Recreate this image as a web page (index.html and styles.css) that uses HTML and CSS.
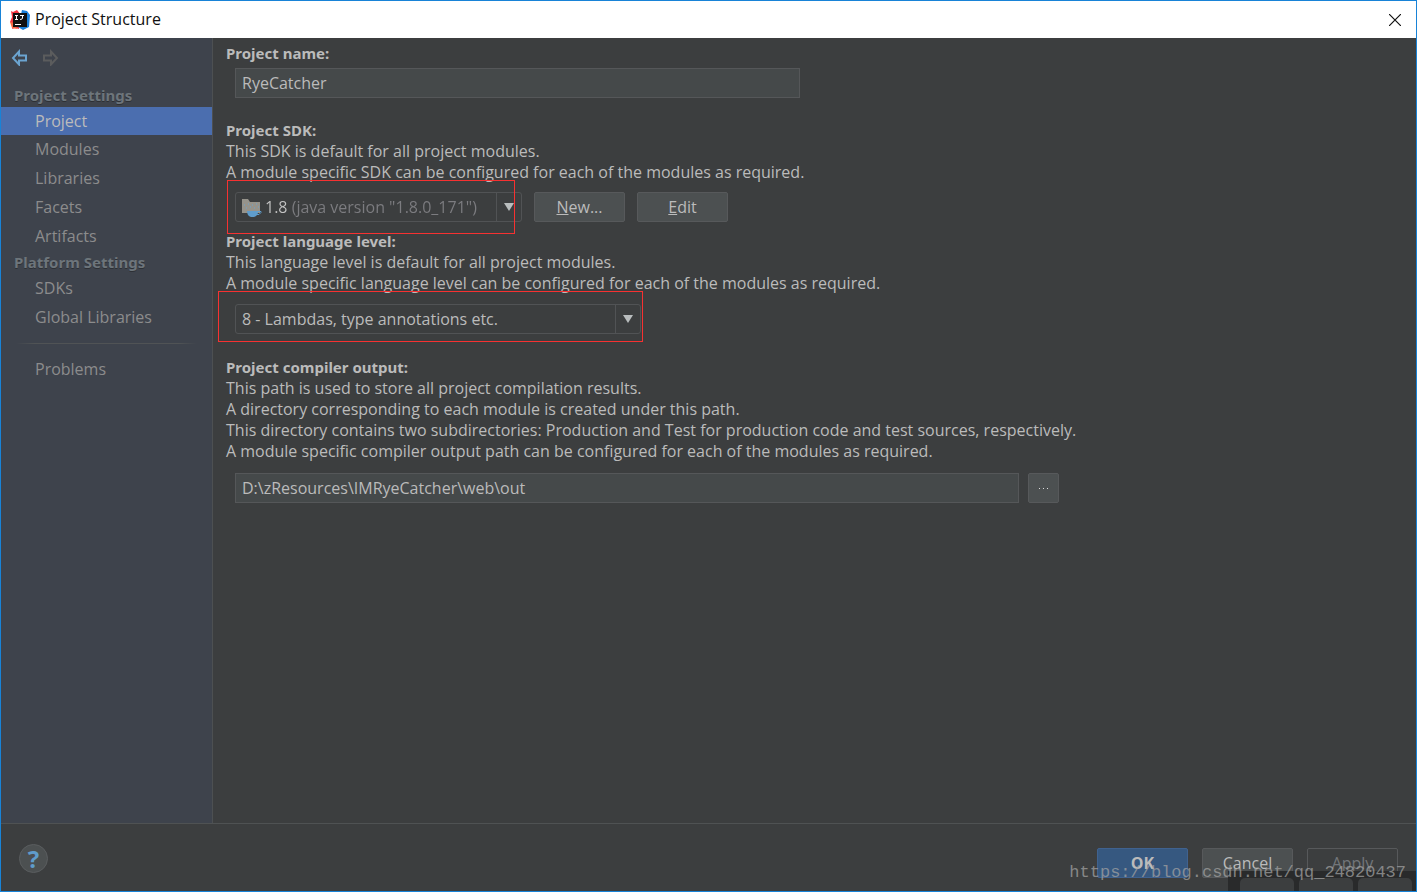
FILE: index.html
```html
<!DOCTYPE html>
<html lang="en">
<head>
    <meta charset="UTF-8">
    <meta name="viewport" content="width=device-width, initial-scale=1.0">
    <title>Project Structure</title>
    <link rel="stylesheet" href="styles.css">
</head>
<body>
    <div class="window">
        <header class="titlebar">
            <svg class="app-icon" width="20" height="20" viewBox="0 0 20 20">
                <path d="M1 1l2 1 4-2 4 5-2 14-4-1-3 1 1-4-3-3 2-5z" fill="#f2343f"/>
                <path d="M12 0l5 1 3 4-1 12-6 3-5-3z" fill="#1a7fd8"/>
                <path d="M0 12l5 1 2 6-5-1z" fill="#f7683f"/>
                <rect x="3" y="3" width="14" height="14" fill="#111"/>
                <path d="M5 5.500h3M6.500 5v5M5 9.500h3M10 5.500h4M12.500 5v3q0 1.500-2.500 1.500M5 14.500h6" fill="none" stroke="#fff"/>
            </svg>
            <h1>Project Structure</h1>
            <button class="close" aria-label="Close">
                <svg width="12" height="12" viewBox="0 0 12 12"><path d="M0 0l12 12M12 0L0 12" stroke="#111" stroke-width="1.2"/></svg>
            </button>
        </header>

        <div class="content">
            <nav class="sidebar">
                <div class="history">
                    <button aria-label="Back">
                        <svg width="17" height="17" viewBox="0 0 17 17"><path d="M8 2.500v4h7v5H8v4L2 9z" fill="none" stroke="#6ba4d0" stroke-width="2"/></svg>
                    </button>
                    <button aria-label="Forward" disabled>
                        <svg width="17" height="17" viewBox="0 0 17 17"><path d="M9 2.500v4H2v5h7v4L15 9z" fill="none" stroke="#5b5c5d" stroke-width="2"/></svg>
                    </button>
                </div>
                <h2>Project Settings</h2>
                <a href="#" class="active">Project</a>
                <a href="#">Modules</a>
                <a href="#">Libraries</a>
                <a href="#">Facets</a>
                <a href="#">Artifacts</a>
                <h2>Platform Settings</h2>
                <a href="#">SDKs</a>
                <a href="#">Global Libraries</a>
                <hr>
                <a href="#">Problems</a>
            </nav>

            <main>
                <section class="name">
                    <label class="title" for="project-name">Project name:</label>
                    <input type="text" id="project-name" value="RyeCatcher">
                </section>

                <section class="sdk">
                    <label class="title" for="project-sdk">Project SDK:</label>
                    <p>This SDK is default for all project modules.</p>
                    <p>A module specific SDK can be configured for each of the modules as required.</p>
                    <div class="row">
                        <div class="combo combo-sdk">
                            <svg class="sdk-icon" width="20" height="18" viewBox="0 0 20 18">
                                <path d="M0 0h6l2 3h10v11H0z" fill="#96938b"/>
                                <path d="M2 6h1M6 5h1M10 6h1M14 5h1M4 9h1M8 8h1M12 9h1M16 8h1" stroke="#6ba4d0"/>
                                <path d="M5 12h11v2q-1 3-4 4H9q-4-1-4-6z" fill="#5f9ccb"/>
                                <path d="M15 12.500h4v1l-2 2h-3" fill="none" stroke="#5f9ccb"/>
                            </svg>
                            <select id="project-sdk">
                                <option>1.8 (java version "1.8.0_171")</option>
                            </select>
                            <span class="arrow"></span>
                            <span class="mark"></span>
                        </div>
                        <button class="btn"><u>N</u>ew...</button>
                        <button class="btn"><u>E</u>dit</button>
                    </div>
                </section>

                <section class="level">
                    <label class="title" for="language-level">Project language level:</label>
                    <p>This language level is default for all project modules.</p>
                    <p>A module specific language level can be configured for each of the modules as required.</p>
                    <div class="row">
                        <div class="combo combo-level">
                            <select id="language-level">
                                <option>8 - Lambdas, type annotations etc.</option>
                            </select>
                            <span class="arrow"></span>
                            <span class="mark"></span>
                        </div>
                    </div>
                </section>

                <section class="output">
                    <label class="title" for="compiler-output">Project compiler output:</label>
                    <p>This path is used to store all project compilation results.</p>
                    <p>A directory corresponding to each module is created under this path.</p>
                    <p>This directory contains two subdirectories: Production and Test for production code and test sources, respectively.</p>
                    <p>A module specific compiler output path can be configured for each of the modules as required.</p>
                    <div class="row">
                        <input type="text" id="compiler-output" value="D:\zResources\IMRyeCatcher\web\out">
                        <button class="btn browse" aria-label="Browse">
                            <svg width="11" height="3" viewBox="0 0 11 3"><path d="M1 1.500h1M5 1.500h1M9 1.500h1" stroke="#ddd"/></svg>
                        </button>
                    </div>
                </section>
            </main>
        </div>

        <footer>
            <button class="help" aria-label="Help">?</button>
            <button class="btn primary">OK</button>
            <button class="btn">Cancel</button>
            <button class="btn" disabled>Apply</button>
        </footer>

        <div class="dock"><span></span><span></span><span></span></div>
        <div class="watermark">https://blog.csdn.net/qq_24820437</div>
    </div>
</body>
</html>
```
FILE: styles.css
```css
* {
    box-sizing: border-box;
}

body {
    margin: 0;
    font-family: "Open Sans", "Noto Sans", sans-serif;
    font-size: 16px;
    line-height: 21px;
    color: #bbbbbb;
    background: #3c3f41;
}

h1, h2, p {
    margin: 0;
}

button, input, select {
    font: inherit;
    color: inherit;
}

button {
    padding: 0;
    border: none;
    background: none;
}

.window {
    position: relative;
    display: flex;
    flex-direction: column;
    min-height: 100vh;
    border: 1px solid #1883d7;
    background: #3c3e3f;
    overflow: hidden;
}

/* Title bar */
.titlebar {
    display: flex;
    align-items: center;
    height: 37px;
    padding: 0 15px 0 9px;
    background: #fff;
    color: #111;
}

.titlebar h1 {
    margin-left: 5px;
    font-size: 16px;
    font-weight: 400;
}

.close {
    display: flex;
    margin-left: auto;
}

.content {
    display: flex;
    flex: 1;
}

/* Sidebar */
.sidebar {
    width: 212px;
    flex-shrink: 0;
    border-right: 1px solid #4d5052;
    background: #3e434c;
    color: #8c8c8c;
}

.history {
    display: flex;
    gap: 14px;
    height: 46px;
    padding: 11px 10px;
}

.history button {
    display: flex;
    height: 17px;
}

.sidebar h2 {
    height: 23px;
    padding-left: 13px;
    font-family: "Noto Sans", sans-serif;
    font-size: 15px;
    font-weight: 700;
    line-height: 23px;
    color: #6d757b;
    text-shadow: 0 1px #2d3035;
}

.sidebar a {
    display: block;
    height: 29px;
    padding-left: 34px;
    line-height: 29px;
    color: inherit;
    text-decoration: none;
}

.sidebar a.active {
    height: 28px;
    background: #4b6eaf;
    color: #bbbbbb;
}

.sidebar hr {
    height: 1px;
    margin: 11px 15px;
    border: none;
    background: linear-gradient(to right, transparent, #505355 10%, #505355 90%, transparent);
}

/* Project page */
main {
    flex: 1;
    padding: 5px 13px;
}

main .title {
    display: block;
    font-family: "Noto Sans", sans-serif;
    font-size: 15px;
    font-weight: 700;
}

main input {
    display: block;
    height: 30px;
    padding: 0 6px 1px;
    border: 1px solid #555759;
    background: #45494a;
}

.row {
    display: flex;
    margin: 9px 0 0 9px;
}

.name input {
    width: 565px;
    margin: 4px 0 0 9px;
}

.sdk {
    margin-top: 22px;
}

.level {
    margin-top: 9px;
}

.level .row {
    margin-top: 10px;
}

.output {
    margin-top: 23px;
}

.output .row {
    margin-top: 11px;
    gap: 9px;
}

.output input {
    width: 784px;
}

.combo {
    position: relative;
    display: flex;
    align-items: center;
    height: 30px;
    border: 1px solid #515355;
    border-radius: 3px;
}

.combo select {
    flex: 1;
    min-width: 0;
    height: 28px;
    padding: 0 0 0 6px;
    border: none;
    background: none;
    appearance: none;
}

.combo-sdk {
    width: 287px;
    margin-right: 12px;
}

.combo-level {
    width: 406px;
}

.sdk-icon {
    margin: 2px 0 0 6px;
}

/* the version number is brighter than the rest of the line */
.combo-sdk select {
    padding-left: 3px;
    background: linear-gradient(to right, #c4c4c4 28px, #7c7c80 28px);
    background-clip: text;
    -webkit-background-clip: text;
    color: transparent;
}

.combo option {
    background: #3c3f41;
    color: #bbbbbb;
}

.arrow {
    display: flex;
    align-items: center;
    justify-content: center;
    width: 25px;
    height: 28px;
    border-left: 1px solid #515355;
    pointer-events: none;
}

.arrow::before {
    content: "";
    border: 5px solid transparent;
    border-top: 8px solid #b9bdbe;
    border-bottom: none;
}

.mark {
    position: absolute;
    top: -13px;
    left: -9px;
    width: 288px;
    height: 54px;
    border: 1px solid #f73131;
    pointer-events: none;
}

.combo-level .mark {
    top: -14px;
    left: -18px;
    width: 425px;
    height: 51px;
}

.btn {
    width: 91px;
    height: 30px;
    border: 1px solid #57595b;
    border-radius: 2px;
    background: #4c5051;
}

.sdk .btn + .btn {
    margin-left: 12px;
}

.browse {
    display: flex;
    align-items: center;
    justify-content: center;
    width: 31px;
}

/* Footer */
footer {
    display: flex;
    align-items: flex-end;
    gap: 14px;
    height: 68px;
    padding: 0 18px 13px;
    border-top: 1px solid #4f5253;
}

.help {
    width: 29px;
    height: 29px;
    margin: 0 auto 5px 0;
    border: 1px solid #5a5d5f;
    border-radius: 50%;
    background: #4c5051;
    font-size: 24px;
    font-weight: 700;
    color: #5f9ccb;
}

.btn.primary {
    border-color: #40628f;
    background: #365880;
    font-weight: 700;
}

.btn:disabled {
    background: none;
    color: #73767a;
}

/* Strip showing over the bottom right corner */
.dock {
    position: absolute;
    right: -1px;
    bottom: -1px;
    display: flex;
    gap: 5px;
    width: 189px;
    height: 21px;
    padding: 7px 5px 0 12px;
    background: #292a2b;
}

.dock span {
    flex: 1;
    border-radius: 5px 5px 0 0;
    background: #3c3e3f;
}

.watermark {
    position: absolute;
    right: 10px;
    bottom: 8px;
    font-family: "Liberation Mono", monospace;
    font-size: 17px;
    color: rgba(160, 160, 160, 0.75);
    pointer-events: none;
}
```
